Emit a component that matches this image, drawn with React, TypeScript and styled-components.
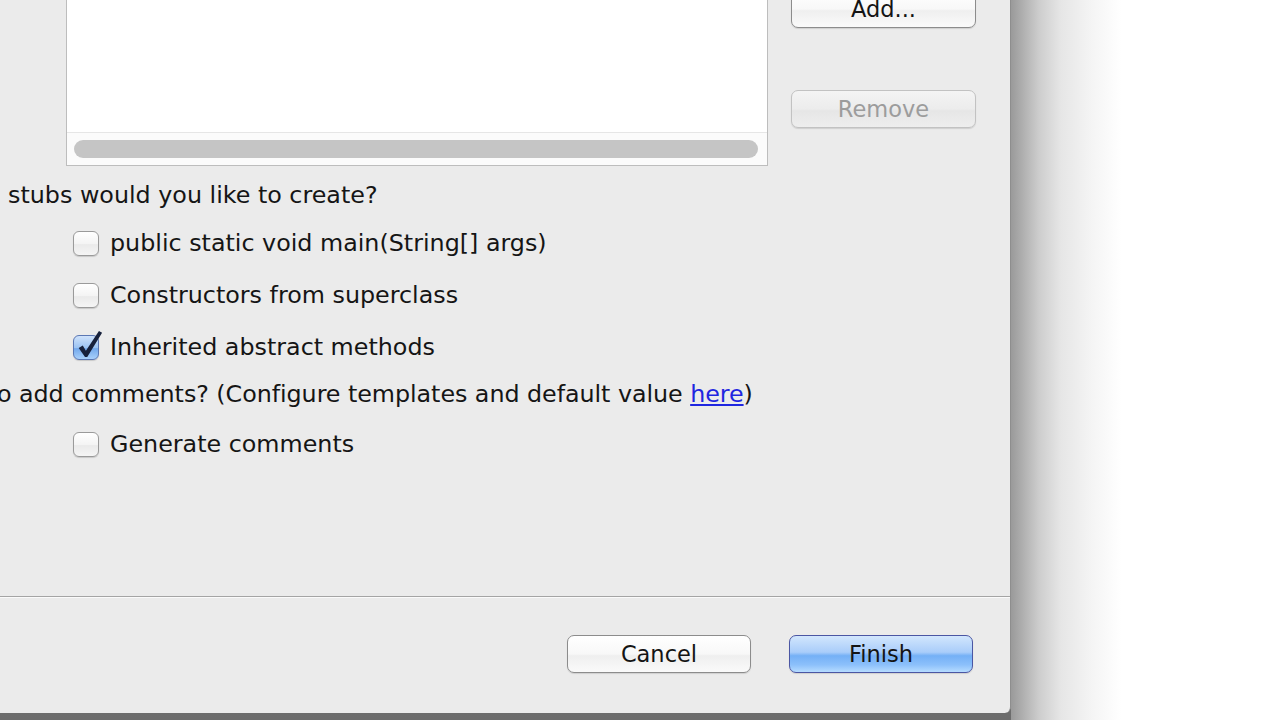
import React from 'react';
import styled, { createGlobalStyle } from 'styled-components';

const GlobalStyle = createGlobalStyle`
  html, body {
    margin: 0;
    padding: 0;
    background: #ffffff;
    overflow: hidden;
  }
  body {
    font-family: "DejaVu Sans", "Liberation Sans", sans-serif;
  }
`;

const Stage = styled.div`
  display: flex;
  width: 1280px;
  height: 720px;
  overflow: hidden;
`;

const DialogColumn = styled.div`
  width: 1011px;
  height: 720px;
  background: linear-gradient(180deg, #7c7c7c 0%, #6c6c6c 100%);
`;

const SideShadow = styled.div`
  flex: 1;
  background: linear-gradient(
    90deg,
    #9a9a9a 0px,
    #acacac 10px,
    #cdcdcd 28px,
    #e6e6e6 50px,
    #f4f4f4 80px,
    #ffffff 110px
  );
`;

const Dialog = styled.div`
  width: 1010px;
  height: 713px;
  background: #ebebeb;
  border-right: 1px solid #8e8e8e;
  border-bottom-right-radius: 6px;
  display: flex;
  flex-direction: column;
  overflow: hidden;
  color: #151515;
  font-size: 23.8px;
`;

const Body = styled.div`
  flex: 1;
  display: flex;
  flex-direction: column;
  margin-top: -10px;
`;

const TopRow = styled.div`
  display: flex;
  align-items: flex-start;
`;

const ListBox = styled.div`
  margin-left: 66px;
  width: 702px;
  height: 176px;
  box-sizing: border-box;
  background: #ffffff;
  border: 1px solid #bdbdbd;
  border-top: none;
  display: flex;
  flex-direction: column;
`;

const ListContent = styled.div`
  flex: 1;
`;

const ScrollTrack = styled.div`
  height: 33px;
  box-sizing: border-box;
  border-top: 1px solid #e6e6e6;
  background: #fbfbfb;
  padding: 7px 9px 7px 7px;
`;

const ScrollThumb = styled.div`
  height: 18px;
  border-radius: 9px;
  background: #c5c5c5;
`;

const SideButtons = styled.div`
  margin-left: 23px;
  display: flex;
  flex-direction: column;
  gap: 62px;
`;

const PushButton = styled.button<{ $disabled?: boolean; $primary?: boolean }>`
  width: 185px;
  height: 38px;
  box-sizing: border-box;
  border-radius: 7px;
  font-family: "DejaVu Sans", "Liberation Sans", sans-serif;
  font-size: 22.5px;
  padding: 0;
  color: ${p => (p.$disabled ? '#9c9c9c' : '#141414')};
  border: 1px solid ${p => (p.$primary ? '#4b56a3' : p.$disabled ? '#c2c2c2' : '#8c8c8c')};
  background: ${p =>
    p.$primary
      ? 'linear-gradient(180deg, #d2e6fd 0%, #a9cdfa 45%, #74b0f6 55%, #8cc0fb 80%, #b6dcff 100%)'
      : p.$disabled
      ? 'linear-gradient(180deg, #f4f4f4 0%, #ececec 50%, #e6e6e6 55%, #eeeeee 100%)'
      : 'linear-gradient(180deg, #ffffff 0%, #f8f8f8 50%, #efefef 55%, #fafafa 100%)'};
  box-shadow: 0 1px 1px rgba(0, 0, 0, 0.12);
`;

const SectionLabel = styled.div<{ $indent: number }>`
  margin-left: ${p => p.$indent}px;
  height: 30px;
  line-height: 30px;
  white-space: nowrap;
`;

const CommentsLabel = styled(SectionLabel)`
  letter-spacing: -0.05px;
`;

const CheckList = styled.div<{ $top: number }>`
  margin-top: ${p => p.$top}px;
  padding-left: 73px;
  display: flex;
  flex-direction: column;
`;

const CheckRow = styled.label`
  height: 52px;
  display: flex;
  align-items: center;
  gap: 11px;
  white-space: nowrap;
`;

const Box = styled.span<{ $checked?: boolean }>`
  position: relative;
  width: 26px;
  height: 25px;
  box-sizing: border-box;
  border-radius: 6px;
  border: 1px solid ${p => (p.$checked ? '#5b77b3' : '#9a9a9a')};
  background: ${p =>
    p.$checked
      ? 'linear-gradient(180deg, #cfe2fb 0%, #9cc4f3 50%, #74a9ec 55%, #a8d0fb 100%)'
      : 'linear-gradient(180deg, #ffffff 0%, #f4f4f4 50%, #eaeaea 55%, #f5f5f5 100%)'};
  box-shadow: 0 1px 1px rgba(0, 0, 0, 0.15);
  flex-shrink: 0;
`;

const CheckMark = styled.svg`
  position: absolute;
  left: 2px;
  top: -6px;
  width: 27px;
  height: 29px;
`;

const Link = styled.span`
  color: #1f26e0;
  text-decoration: underline;
`;

const Footer = styled.div`
  height: 117px;
  box-sizing: border-box;
  border-top: 1px solid #a4a4a4;
  box-shadow: inset 0 1px 0 #fafafa;
  display: flex;
  justify-content: flex-end;
  align-items: flex-start;
  gap: 38px;
  padding: 38px 37px 0 0;
`;

const FooterButton = styled(PushButton)`
  width: 184px;
`;

function Checkbox({ checked, label }: { checked?: boolean; label: string }) {
  return (
    <CheckRow>
      <Box $checked={checked}>
        {checked && (
          <CheckMark viewBox="0 0 30 32">
            <path d="M3 20 L7.5 17 L11 23 L25.5 1 L29 3 L12.5 30 L10 30 Z" fill="#17213c" />
          </CheckMark>
        )}
      </Box>
      <span>{label}</span>
    </CheckRow>
  );
}

export default function App() {
  return (
    <>
      <GlobalStyle />
      <Stage>
        <DialogColumn>
          <Dialog>
            <Body>
              <TopRow>
                <ListBox>
                  <ListContent />
                  <ScrollTrack>
                    <ScrollThumb />
                  </ScrollTrack>
                </ListBox>
                <SideButtons>
                  <PushButton>Add...</PushButton>
                  <PushButton $disabled>Remove</PushButton>
                </SideButtons>
              </TopRow>

              <SectionLabel $indent={8} style={{ marginTop: 14 }}>
                stubs would you like to create?
              </SectionLabel>
              <CheckList $top={7}>
                <Checkbox label="public static void main(String[] args)" />
                <Checkbox label="Constructors from superclass" />
                <Checkbox checked label="Inherited abstract methods" />
              </CheckList>

              <CommentsLabel $indent={-3} style={{ marginTop: 6 }}>
                o add comments? (Configure templates and default value <Link>here</Link>)
              </CommentsLabel>
              <CheckList $top={9}>
                <Checkbox label="Generate comments" />
              </CheckList>
            </Body>
            <Footer>
              <FooterButton>Cancel</FooterButton>
              <FooterButton $primary>Finish</FooterButton>
            </Footer>
          </Dialog>
        </DialogColumn>
        <SideShadow />
      </Stage>
    </>
  );
}
